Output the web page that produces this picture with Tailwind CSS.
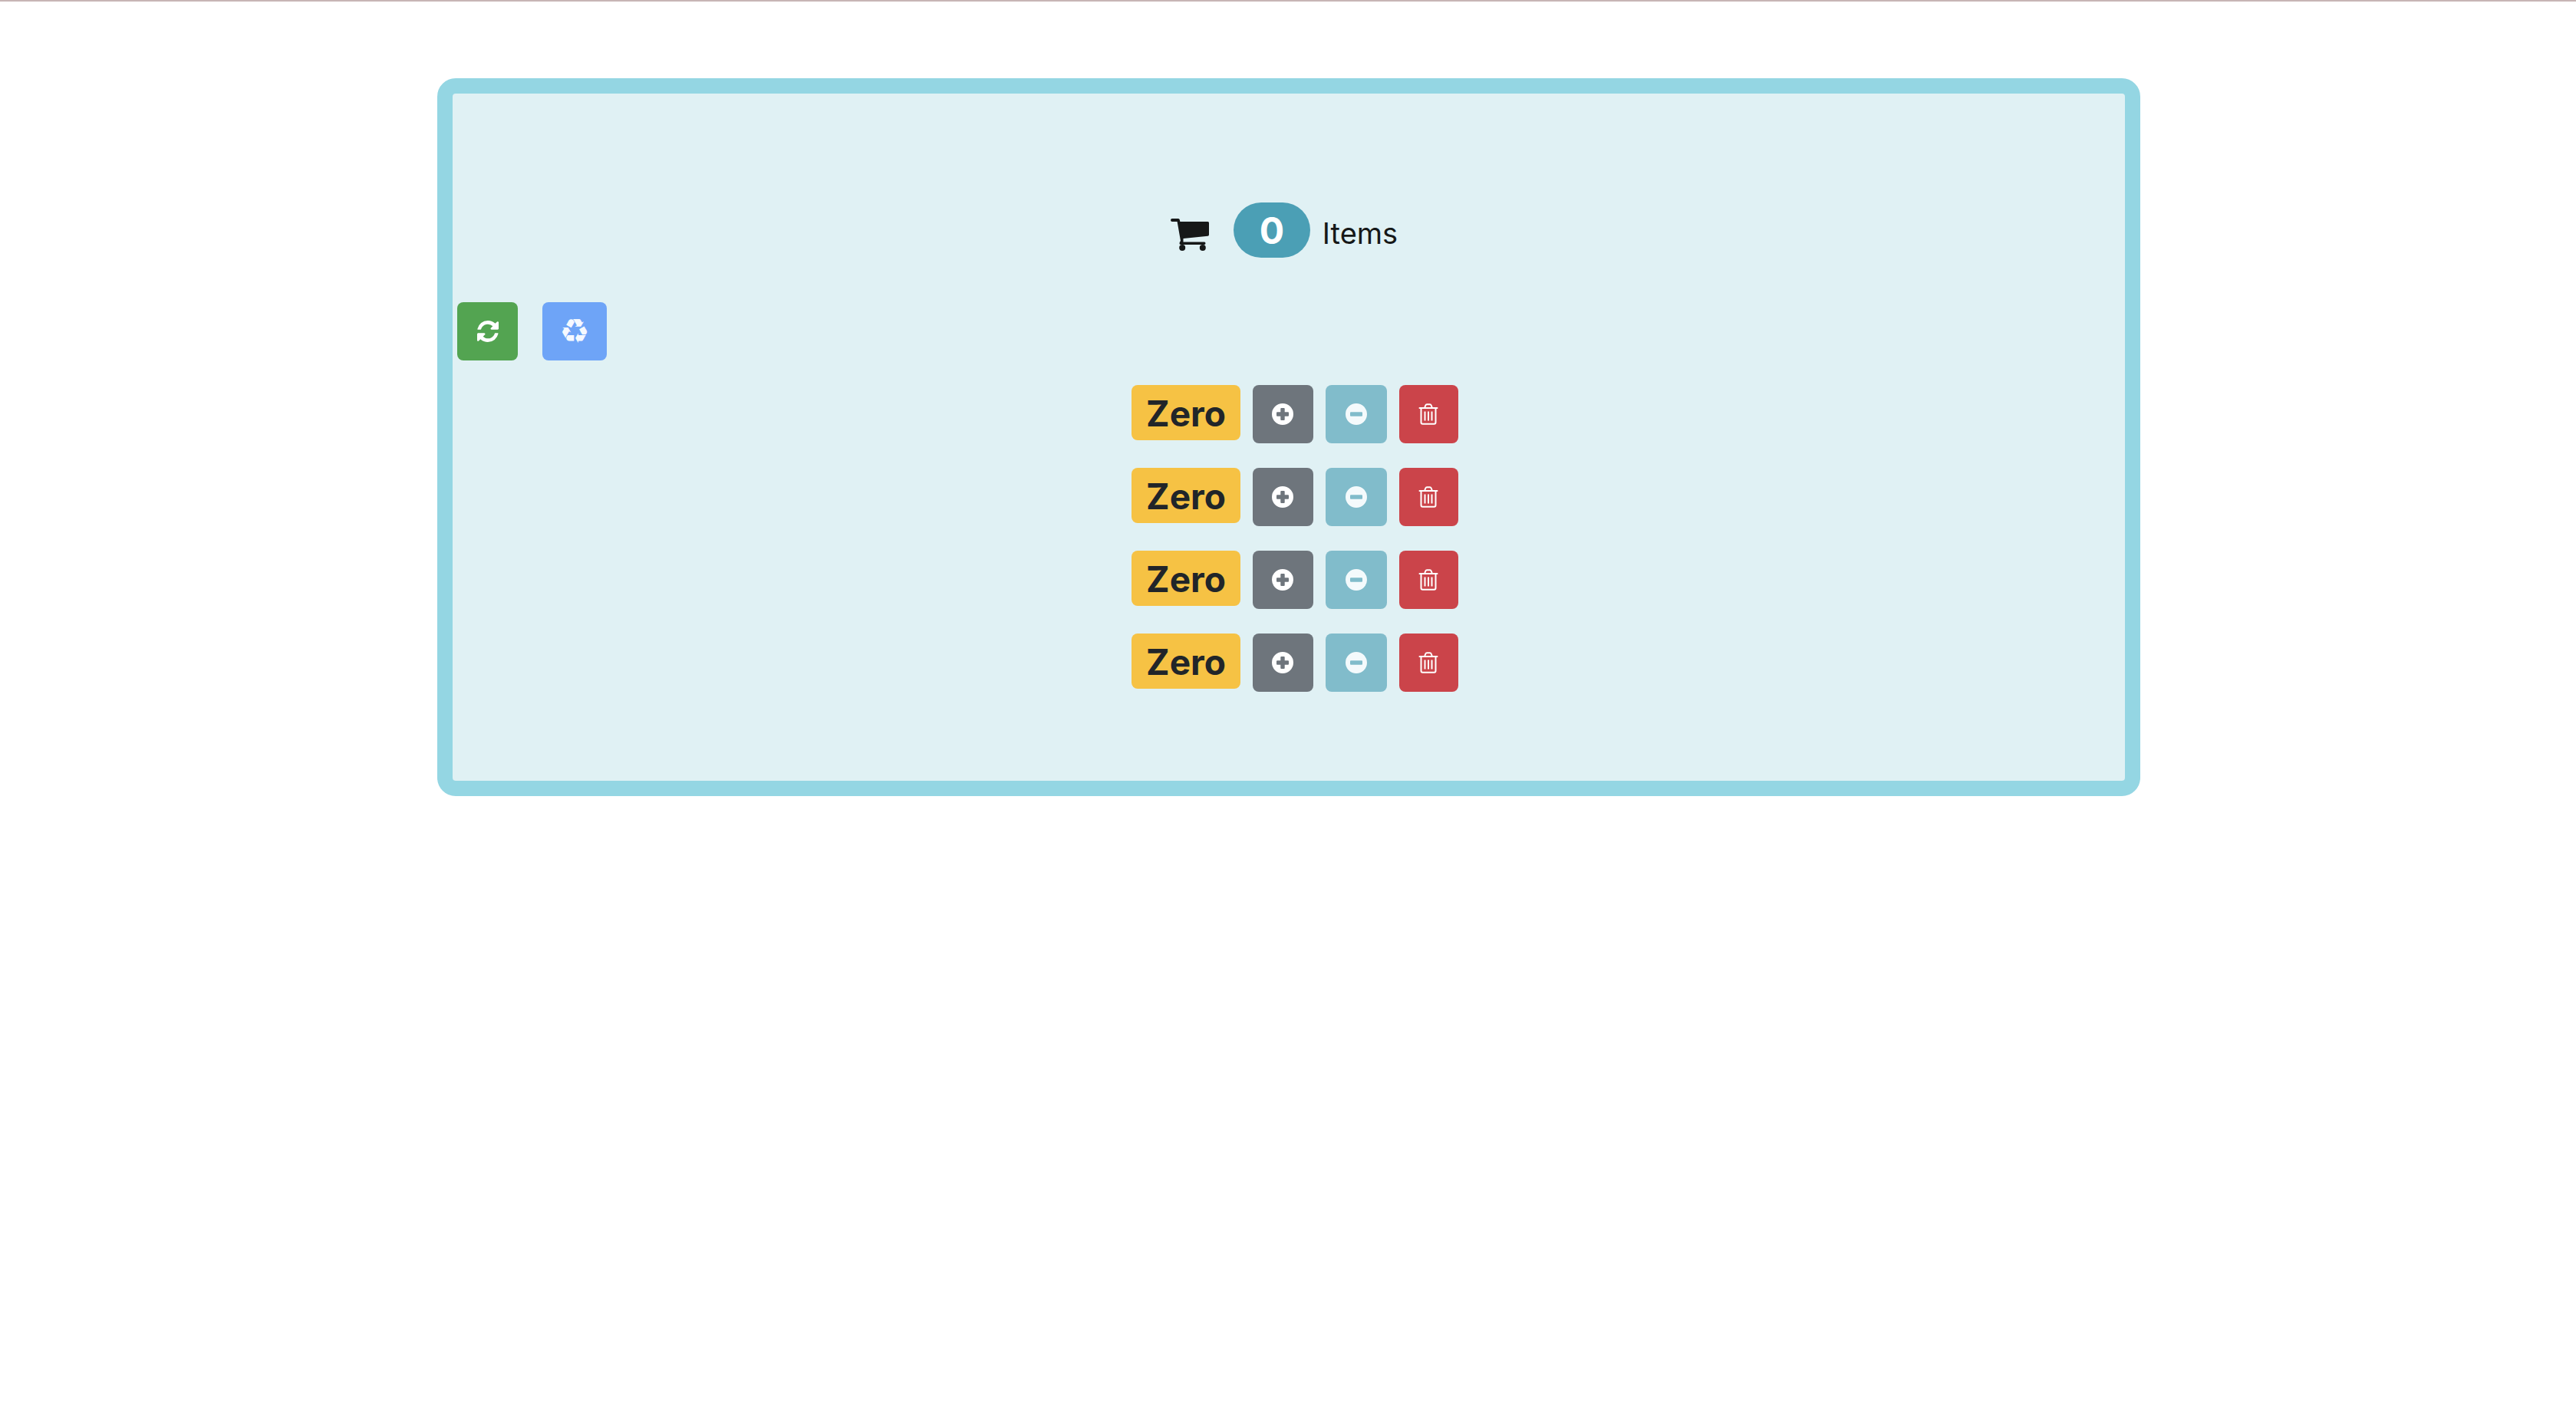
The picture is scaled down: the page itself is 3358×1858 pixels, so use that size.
<!DOCTYPE html>
<html lang="en">
<head>
<meta charset="utf-8">
<meta name="viewport" content="width=device-width, initial-scale=1">
<title>Shopping Cart</title>
<script src="https://cdn.jsdelivr.net/npm/@tailwindcss/browser@4"></script>
</head>
<body class="min-h-screen border-t-2 border-[#c7b5b5] bg-white pl-0.5 font-['Inter',sans-serif] text-[#161818]">
<svg class="hidden" aria-hidden="true">
  <symbol id="plus" viewBox="0 0 28 28"><path fill="currentColor" fill-rule="evenodd" d="M14 0a14 14 0 1 1 0 28a14 14 0 1 1 0-28zM12.3 6a1 1 0 0 0-1 1v4.300h-4.300a1 1 0 0 0-1 1v3.400a1 1 0 0 0 1 1h4.300v4.300a1 1 0 0 0 1 1h3.400a1 1 0 0 0 1-1v-4.300h4.300a1 1 0 0 0 1-1v-3.400a1 1 0 0 0-1-1h-4.300v-4.300a1 1 0 0 0-1-1z"/></symbol>
  <symbol id="minus" viewBox="0 0 28 28"><path fill="currentColor" fill-rule="evenodd" d="M14 0a14 14 0 1 1 0 28a14 14 0 1 1 0-28zM7 11.300a1 1 0 0 0-1 1v3.400a1 1 0 0 0 1 1h14a1 1 0 0 0 1-1v-3.400a1 1 0 0 0-1-1z"/></symbol>
  <symbol id="trash" viewBox="0 0 26 28"><g fill="none" stroke="currentColor" stroke-width="2" stroke-linecap="round" stroke-linejoin="round"><path d="M1.500 6h23M8 6l1.300-3.500q.5-1.300 1.800-1.300h3.800q1.300 0 1.800 1.300L18 6M3.500 6v18.500q0 2.300 2 2.300h15q2 0 2-2.300V6"/><path stroke-linecap="butt" d="M8.500 10.500v12M13 10.500v12M17.500 10.500v12"/></g></symbol>
</svg>
<main class="mx-auto mt-[100px] w-[66.150%] rounded-3xl border-20 border-[#94d6e3] bg-[#e0f1f4] px-1.5 pt-[142px] pb-[116px]">
  <header class="flex h-[72px] items-center justify-center pr-3">
    <svg class="mt-3 h-[42px] w-[50px]" viewBox="0 0 50 42" fill="currentColor" aria-label="Cart">
      <path d="M2 0h8q1.500 0 1.800 1.500l.5 2.500H48.500q1.500 0 1.500 1.500v15.500q0 1.500-1.500 1.700L16.500 26v4.500H44q1.500 0 1.500 1.700T44 34H13q-1.500 0-1.500-1.700q0-1.500 1.500-3.300L8.600 4H2Q0 4 0 2T2 0z"/>
      <circle cx="15.200" cy="38" r="4"/><circle cx="41.800" cy="38" r="4"/>
    </svg>
    <span class="ml-8 flex h-[72px] w-[100px] items-center justify-center rounded-full bg-[#4b9fb5] pt-0.5 text-5xl font-bold text-white">0</span>
    <span class="ml-4 mt-2 text-[38px] leading-12">Items</span>
  </header>
  <div class="mt-[58px] flex gap-8">
    <button class="flex h-[76px] w-[79px] items-center justify-center rounded-lg bg-[#53a451] text-white" aria-label="Refresh">
      <svg class="size-7" viewBox="0 0 1536 1536" fill="currentColor"><path d="M1511 928q0 5-1 7-64 268-268 434.500t-478 166.500q-146 0-282.500-55t-243.500-157l-129 129q-19 19-45 19t-45-19-19-45v-448q0-26 19-45t45-19h448q26 0 45 19t19 45-19 45l-137 137q71 66 161 102t187 36q134 0 250-65t186-179q11-17 53-117 8-23 30-23h192q13 0 22.500 9.500t9.500 22.500zm25-800v448q0 26-19 45t-45 19h-448q-26 0-45-19t-19-45 19-45l138-138q-148-137-349-137-134 0-250 65t-186 179q-11 17-53 117-8 23-30 23h-199q-13 0-22.500-9.500t-9.500-22.500v-7q65-268 270-434.500t480-166.500q146 0 284 55.500t245 156.500l130-129q19-19 45-19t45 19 19 45z"/></svg>
    </button>
    <button class="flex h-[76px] w-[84px] items-center justify-center rounded-lg bg-[#6ea4f7] font-['DejaVu_Sans',sans-serif] text-[44px] leading-11 text-[#f5f9ff]" aria-label="Recycle" disabled>♻</button>
  </div>
  <ul id="items" class="mt-8 flex flex-col gap-8 pl-4">
    <li class="flex justify-center gap-4">
      <span class="flex h-[72px] w-[142px] items-center justify-center rounded-lg bg-[#f6c244] pt-0.5 text-[46px] leading-12 font-bold text-[#212529]">Zero</span>
      <button class="flex h-[76px] w-[79px] items-center justify-center rounded-lg bg-[#6e757c] text-white" aria-label="Add"><svg class="size-7"><use href="#plus"/></svg></button>
      <button class="flex h-[76px] w-20 items-center justify-center rounded-lg bg-[#81bccb] text-[#f4fafc]" aria-label="Remove" disabled><svg class="size-7"><use href="#minus"/></svg></button>
      <button class="flex h-[76px] w-[77px] items-center justify-center rounded-lg bg-[#cb444a] text-white" aria-label="Delete"><svg class="h-7 w-[26px]"><use href="#trash"/></svg></button>
    </li>
  </ul>
</main>
<script>
  const list = document.getElementById('items');
  const row = list.firstElementChild;
  for (let i = 1; i < 4; i++) list.append(row.cloneNode(true));
</script>
</body>
</html>
